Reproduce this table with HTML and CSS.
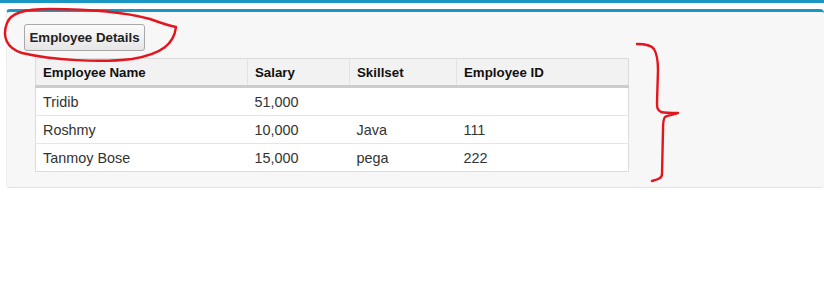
FILE: index.html
```html
<!DOCTYPE html>
<html>
<head>
<meta charset="utf-8">
<link rel="stylesheet" href="styles.css">
</head>
<body>
<div class="topbar"></div>
<div class="panel">
  <button class="btn">Employee Details</button>
  <table class="grid">
    <colgroup>
      <col class="c1"><col class="c2"><col class="c3"><col class="c4">
    </colgroup>
    <thead>
      <tr><th>Employee Name</th><th>Salary</th><th>Skillset</th><th>Employee ID</th></tr>
    </thead>
    <tbody>
      <tr><td>Tridib</td><td>51,000</td><td></td><td></td></tr>
      <tr><td>Roshmy</td><td>10,000</td><td>Java</td><td>111</td></tr>
      <tr><td>Tanmoy Bose</td><td>15,000</td><td>pega</td><td>222</td></tr>
    </tbody>
  </table>
</div>
<svg class="marks" width="824" height="286" viewBox="0 0 824 286">
  <path d="M176 27 C174 44 162 54 132 59 C100 63 52 60 22 53 C6 48 2 36 7 23 C11 13 24 9 50 9 C90 9 128 13 150 19 C161 23 170 26 176 27" />
  <path d="M637 44 C645 44 651 45 654 49 C657 54 658 60 658 70 L657 102 C657 107 657 110 661 112 C666 113 672 113 678 113 C674 115 668 115 665 117 C663 119 663 123 663 130 L662 174 C662 178 659 179 652 181" />
</svg>
</body>
</html>
```
FILE: styles.css
```css
html, body {
  margin: 0;
  padding: 0;
  background: #ffffff;
  font-family: "Liberation Sans", Arial, sans-serif;
}
.topbar {
  height: 3px;
  background: #1b96c3;
}
.panel {
  margin: 6px 0 0 6px;
  border-top: 3px solid #1b96c3;
  border-left: 1px solid #eeeeee;
  border-bottom: 1px solid #e3e3e3;
  border-radius: 4px;
  background: #f7f7f7;
  padding: 12px 0 15px 17px;
  height: 148px;
}
.btn {
  display: block;
  width: 121px;
  height: 27px;
  padding: 0;
  border: 1px solid #a8a8a8;
  border-radius: 3px;
  background: linear-gradient(#fbfbfb, #e6e6e6);
  font-family: "Liberation Sans", Arial, sans-serif;
  font-weight: bold;
  font-size: 13.3px;
  color: #222;
}
.grid {
  margin: 7px 0 0 11px;
  width: 593px;
  border-collapse: collapse;
  table-layout: fixed;
  border: 1px solid #dcdcdc;
  background: #ffffff;
}
.c1 { width: 212px; }
.c2 { width: 102px; }
.c3 { width: 107px; }
.c4 { width: 172px; }
.grid th {
  height: 26px;
  padding: 0 0 0 7px;
  text-align: left;
  font-size: 13.3px;
  font-weight: bold;
  color: #111;
  background: #f2f2f2;
  border-right: 1px solid #e2e2e2;
  border-bottom: 3px solid #cccccc;
}
.grid th:last-child { border-right: none; }
.grid td {
  height: 27px;
  padding: 0 0 0 7px;
  font-size: 14.4px;
  color: #333;
  border-bottom: 1px solid #e9e5d9;
}
.grid tbody tr:last-child td { border-bottom: 1px solid #dcdcdc; }
.marks {
  position: absolute;
  left: 0;
  top: 0;
  fill: none;
  stroke: #e3151d;
  stroke-width: 2.4;
  stroke-linecap: round;
  stroke-linejoin: round;
}
```
